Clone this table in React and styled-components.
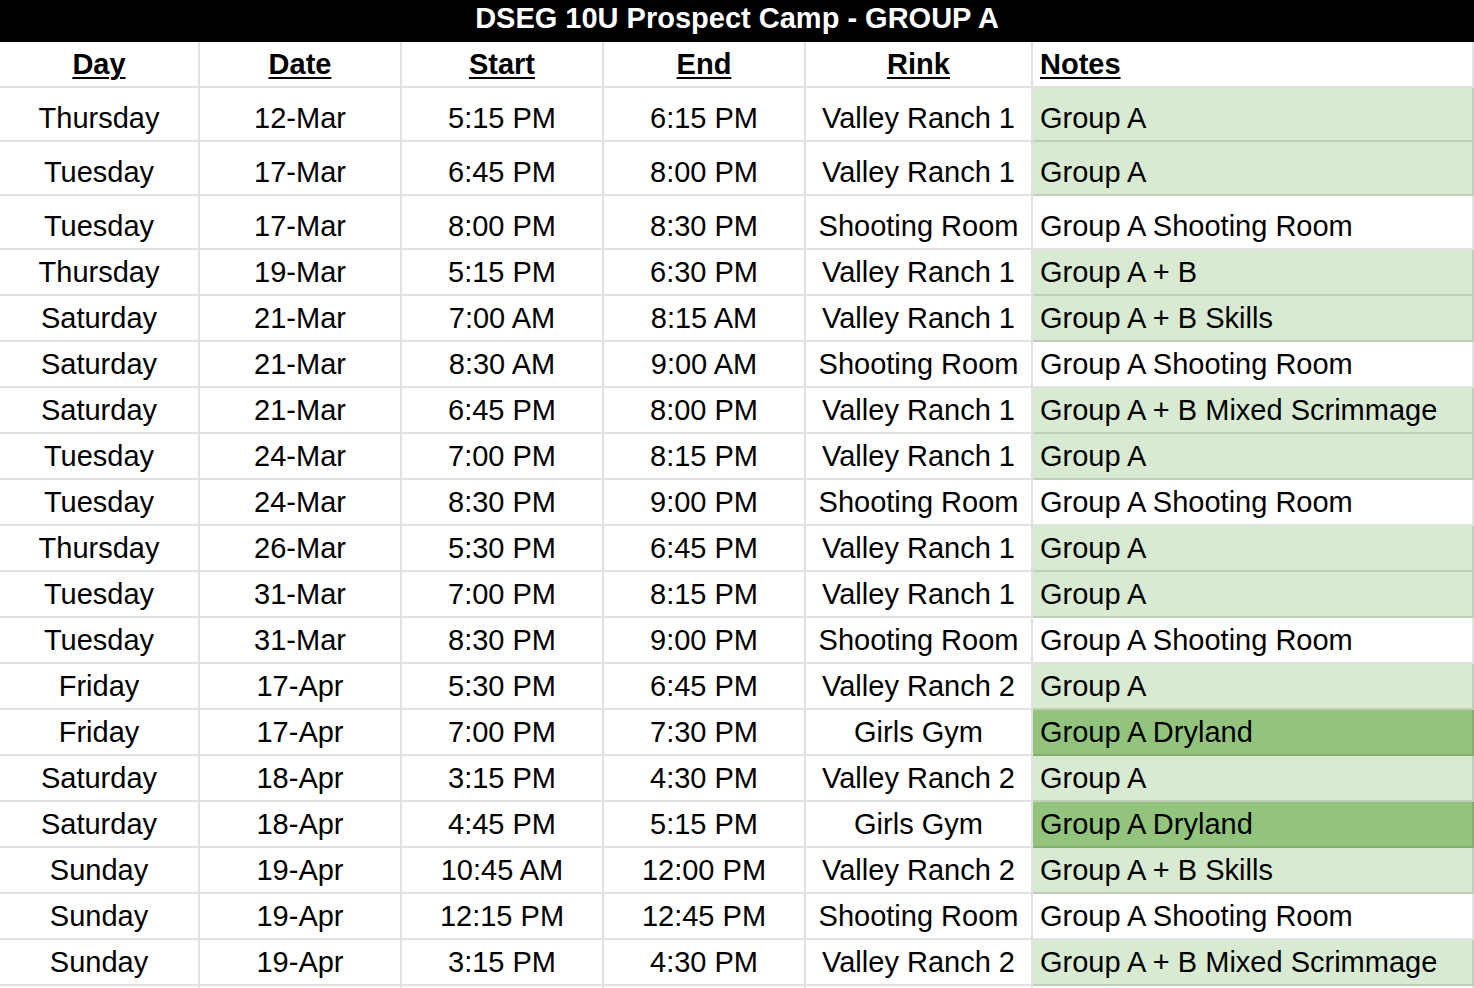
import React from 'react'
import styled, { createGlobalStyle } from 'styled-components'

const GlobalStyle = createGlobalStyle`
    html, body {
        margin : 0;
        padding : 0;
        background : #ffffff;
        overflow : hidden;
    }
    body {
        font-family : "Liberation Sans", Arial, sans-serif;
        color : #000000;
    }
`

const fills = {
    none : '#ffffff',
    light : '#d9ead3',
    dark : '#93c47d',
}

const rows = [
    ['Thursday', '12-Mar', '5:15 PM', '6:15 PM', 'Valley Ranch 1', 'Group A', 'light', true],
    ['Tuesday', '17-Mar', '6:45 PM', '8:00 PM', 'Valley Ranch 1', 'Group A', 'light', true],
    ['Tuesday', '17-Mar', '8:00 PM', '8:30 PM', 'Shooting Room', 'Group A Shooting Room', 'none', true],
    ['Thursday', '19-Mar', '5:15 PM', '6:30 PM', 'Valley Ranch 1', 'Group A + B', 'light'],
    ['Saturday', '21-Mar', '7:00 AM', '8:15 AM', 'Valley Ranch 1', 'Group A + B Skills', 'light'],
    ['Saturday', '21-Mar', '8:30 AM', '9:00 AM', 'Shooting Room', 'Group A Shooting Room', 'none'],
    ['Saturday', '21-Mar', '6:45 PM', '8:00 PM', 'Valley Ranch 1', 'Group A + B Mixed Scrimmage', 'light'],
    ['Tuesday', '24-Mar', '7:00 PM', '8:15 PM', 'Valley Ranch 1', 'Group A', 'light'],
    ['Tuesday', '24-Mar', '8:30 PM', '9:00 PM', 'Shooting Room', 'Group A Shooting Room', 'none'],
    ['Thursday', '26-Mar', '5:30 PM', '6:45 PM', 'Valley Ranch 1', 'Group A', 'light'],
    ['Tuesday', '31-Mar', '7:00 PM', '8:15 PM', 'Valley Ranch 1', 'Group A', 'light'],
    ['Tuesday', '31-Mar', '8:30 PM', '9:00 PM', 'Shooting Room', 'Group A Shooting Room', 'none'],
    ['Friday', '17-Apr', '5:30 PM', '6:45 PM', 'Valley Ranch 2', 'Group A', 'light'],
    ['Friday', '17-Apr', '7:00 PM', '7:30 PM', 'Girls Gym', 'Group A Dryland', 'dark'],
    ['Saturday', '18-Apr', '3:15 PM', '4:30 PM', 'Valley Ranch 2', 'Group A', 'light'],
    ['Saturday', '18-Apr', '4:45 PM', '5:15 PM', 'Girls Gym', 'Group A Dryland', 'dark'],
    ['Sunday', '19-Apr', '10:45 AM', '12:00 PM', 'Valley Ranch 2', 'Group A + B Skills', 'light'],
    ['Sunday', '19-Apr', '12:15 PM', '12:45 PM', 'Shooting Room', 'Group A Shooting Room', 'none'],
    ['Sunday', '19-Apr', '3:15 PM', '4:30 PM', 'Valley Ranch 2', 'Group A + B Mixed Scrimmage', 'light'],
]

const headers = ['Day', 'Date', 'Start', 'End', 'Rink', 'Notes']

const App = () => {
    return (
        <>
            <GlobalStyle />
            <Sheet>
                <Title>DSEG 10U Prospect Camp - GROUP A</Title>
                <Row $height={46}>
                    {headers.map((h, i) => (
                        <HeadCell key={h} $left={i === 5}>{h}</HeadCell>
                    ))}
                </Row>
                {rows.map((r, idx) => (
                    <Row key={idx} $height={r[7] ? 54 : 46}>
                        <Cell>{r[0]}</Cell>
                        <Cell>{r[1]}</Cell>
                        <Cell>{r[2]}</Cell>
                        <Cell>{r[3]}</Cell>
                        <Cell>{r[4]}</Cell>
                        <Cell $left $fill={fills[r[6]]}>{r[5]}</Cell>
                    </Row>
                ))}
                {/* empty row cut off at the bottom */}
                <Row $height={46}>
                    {headers.map((h) => <Cell key={h} />)}
                </Row>
            </Sheet>
        </>
    )
}

const Sheet = styled.div`
    width : 1474px;
    display : flex;
    flex-direction : column;
`
const Title = styled.div`
    height : 42px;
    box-sizing : border-box;
    padding-top : 2px;
    background : #000000;
    color : #ffffff;
    font-size : 29px;
    font-weight : bold;
    line-height : 33px;
    text-align : center;
    white-space : nowrap;
`
const Row = styled.div`
    height : ${props => props.$height}px;
    display : grid;
    grid-template-columns : 200px 202px 202px 202px 227px 441px;
`
const Cell = styled.div`
    box-sizing : border-box;
    display : flex;
    align-items : flex-end;
    justify-content : ${props => props.$left ? 'flex-start' : 'center'};
    padding : 0 ${props => props.$left ? '7px' : '0'} 5px;
    background : ${props => props.$fill || '#ffffff'};
    border-right : 2px solid rgba(0, 0, 0, 0.115);
    border-bottom : 2px solid rgba(0, 0, 0, 0.115);
    font-size : 29px;
    line-height : 33px;
    white-space : nowrap;
    overflow : hidden;
`
const HeadCell = styled(Cell)`
    font-weight : bold;
    text-decoration : underline;
    text-decoration-thickness : 2px;
    text-underline-offset : 3px;
`

export default App
